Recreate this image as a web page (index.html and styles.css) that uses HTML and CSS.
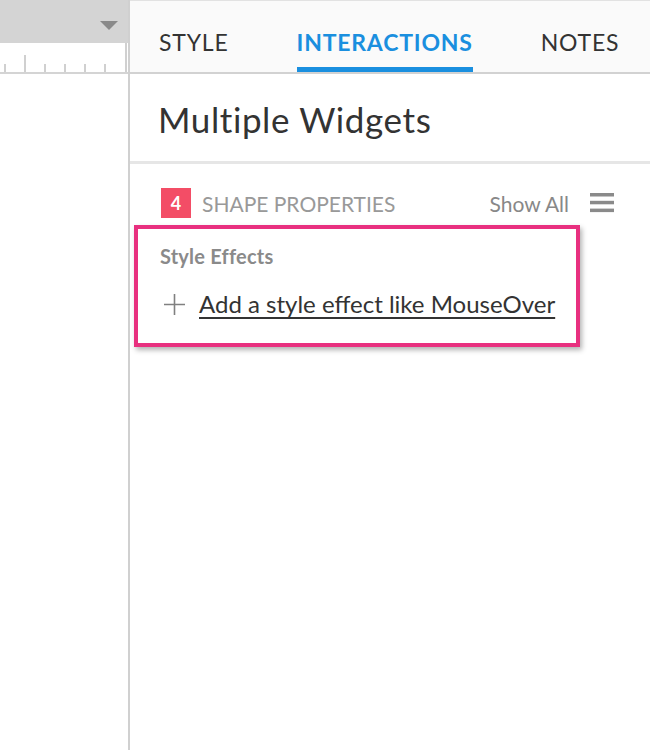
FILE: index.html
```html
<!DOCTYPE html>
<html>
<head>
    <title>Interactions</title>
    <link rel="stylesheet" href="styles.css">
</head>
<body>
    <div class="canvas">
        <div class="toolbar">
            <span class="caret"></span>
        </div>
        <div class="ruler"></div>
    </div>

    <div class="panel">
        <div class="tabs">
            <div class="tab">STYLE</div>
            <div class="tab active">INTERACTIONS</div>
            <div class="tab">NOTES</div>
        </div>

        <h1 class="title">Multiple Widgets</h1>

        <div class="props">
            <span class="badge">4</span>
            <span class="props-label">SHAPE PROPERTIES</span>
            <span class="show-all">Show All</span>
            <svg class="menu" width="24" height="20" viewBox="0 0 24 20">
                <rect x="0" y="0" width="24" height="3.5" fill="#8a8a8a"/>
                <rect x="0" y="7.8" width="24" height="3.5" fill="#8a8a8a"/>
                <rect x="0" y="15.6" width="24" height="3.5" fill="#8a8a8a"/>
            </svg>
        </div>

        <div class="effects">
            <div class="effects-title">Style Effects</div>
            <div class="add-row">
                <svg class="plus" width="21" height="21" viewBox="0 0 21 21">
                    <path d="M10.5 0v21M0 10.5h21" stroke="#808080" stroke-width="1.6" fill="none"/>
                </svg>
                <a class="add-link" href="#">Add a style effect like MouseOver</a>
            </div>
        </div>
    </div>
</body>
</html>
```

FILE: styles.css
```css
body {
    margin: 0;
    font-family: 'Lato', 'Open Sans', sans-serif;
    color: #333;
    display: flex;
    height: 750px;
    background: #fff;
    overflow: hidden;
}
.canvas {
    width: 128px;
    border-right: 2px solid #d0d0d0;
    flex-shrink: 0;
}
.toolbar {
    height: 43px;
    background: #d4d4d4;
    position: relative;
}
.caret {
    position: absolute;
    left: 100px;
    top: 21px;
    border-left: 9px solid transparent;
    border-right: 9px solid transparent;
    border-top: 9px solid #8a8a8a;
}
.ruler {
    height: 29px;
    border-bottom: 2px solid #d4d4d4;
    background:
        linear-gradient(#d0d0d0, #d0d0d0) 125px 0 / 2px 100% no-repeat,
        linear-gradient(#d0d0d0, #d0d0d0) 24px 100% / 2px 17px no-repeat,
        repeating-linear-gradient(90deg, transparent 0 4px, #d0d0d0 4px 6px, transparent 6px 20px) 0 100% / 120px 8px no-repeat;
}
.panel {
    flex: 1;
    min-width: 0;
    display: flex;
    flex-direction: column;
}
.tabs {
    background: #fafafa;
    border-top: 1px solid #e2e2e2;
    border-bottom: 2px solid #d2d2d2;
    display: flex;
    align-items: flex-end;
    padding-left: 29px;
    box-sizing: border-box;
    height: 74px;
}
.tab {
    font-size: 23px;
    line-height: 28px;
    letter-spacing: 0.8px;
    color: #333;
    padding-bottom: 11px;
    border-bottom: 5px solid transparent;
    margin-right: 68px;
    white-space: nowrap;
}
.tab:last-child {
    margin-right: 0;
}
.tab.active {
    color: #1a8fdf;
    font-weight: bold;
    border-bottom-color: #1a8fdf;
}
.title {
    font-size: 35px;
    line-height: 42px;
    letter-spacing: 0.6px;
    font-weight: normal;
    margin: 0;
    padding: 24px 0 0 28px;
    height: 63px;
    border-bottom: 3px solid #e6e6e6;
}
.props {
    display: flex;
    align-items: center;
    padding: 24px 0 0 31px;
    height: 30px;
}
.badge {
    width: 30px;
    height: 30px;
    background: #f34d66;
    color: #fff;
    font-weight: bold;
    font-size: 18px;
    display: flex;
    align-items: center;
    justify-content: center;
}
.props-label {
    font-size: 21px;
    color: #999;
    margin-left: 11px;
    flex: 1;
}
.show-all {
    font-size: 21px;
    color: #888;
    margin-right: 21px;
}
.menu {
    margin-right: 36px;
}
.effects {
    margin: 7px 0 0 4px;
    width: 446px;
    border: 4px solid #e8307f;
    box-shadow: 2px 3px 5px rgba(0,0,0,0.3);
    padding: 15px 0 24px 22px;
    box-sizing: border-box;
}
.effects-title {
    font-size: 20px;
    line-height: 24px;
    letter-spacing: 0.2px;
    font-weight: bold;
    color: #8a8a8a;
}
.add-row {
    display: flex;
    align-items: center;
    height: 30px;
    margin-top: 21px;
}
.plus {
    margin: 0 14px 0 4px;
}
.add-link {
    font-size: 24px;
    line-height: 30px;
    color: #333;
    text-decoration: underline;
    text-underline-offset: 4px;
}
```
